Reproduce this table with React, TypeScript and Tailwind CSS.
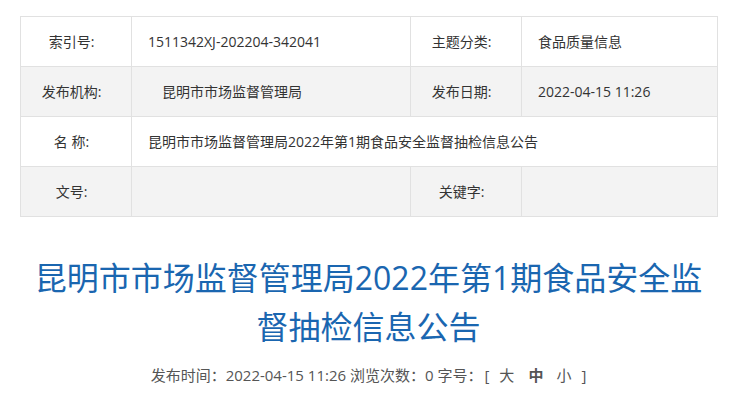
const font = "font-['Open_Sans','Noto_Sans_CJK_SC',sans-serif]";

function Label({ children }: { children: React.ReactNode }) {
  return (
    <td className="h-[50px] w-[111px] border border-[#e1e1e1] pr-[9px] text-center text-[14px] text-[#333]">
      {children}
    </td>
  );
}

function Value({ children, colSpan }: { children?: React.ReactNode; colSpan?: number }) {
  return (
    <td colSpan={colSpan} className="h-[50px] border border-[#e1e1e1] pl-[16px] text-[14px] text-[#333]">
      {children}
    </td>
  );
}

export default function App() {
  return (
    <div className={`min-h-[406px] bg-white pt-[16px] ${font}`}>
      <table className="mx-[20px] w-[697px] table-fixed border-collapse">
        <colgroup>
          <col className="w-[111px]" />
          <col className="w-[279px]" />
          <col className="w-[111px]" />
          <col className="w-[196px]" />
        </colgroup>
        <tbody>
          <tr className="bg-white">
            <Label>索引号:</Label>
            <Value>1511342XJ-202204-342041</Value>
            <Label>主题分类:</Label>
            <Value>食品质量信息</Value>
          </tr>
          <tr className="bg-[#f3f3f3]">
            <Label>发布机构:</Label>
            <Value>
              <span className="pl-[14px]">昆明市市场监督管理局</span>
            </Value>
            <Label>发布日期:</Label>
            <Value>2022-04-15 11:26</Value>
          </tr>
          <tr className="bg-white">
            <Label>名 称:</Label>
            <Value colSpan={3}>昆明市市场监督管理局2022年第1期食品安全监督抽检信息公告</Value>
          </tr>
          <tr className="bg-[#f3f3f3]">
            <Label>文号:</Label>
            <Value />
            <Label>关键字:</Label>
            <Value />
          </tr>
        </tbody>
      </table>

      <h1 className="mx-auto mt-[36px] w-[690px] text-center text-[32px] leading-[49px] text-[#1a66b0]">
        昆明市市场监督管理局2022年第1期食品安全监督抽检信息公告
      </h1>

      <div className="mt-[13px] flex justify-center text-[15px] text-[#555]">
        <span>发布时间：2022-04-15 11:26 浏览次数：0 字号：</span>
        <span className="ml-[2px]">[</span>
        <span className="ml-[10px]">大</span>
        <span className="ml-[14px] font-bold">中</span>
        <span className="ml-[13px]">小</span>
        <span className="ml-[10px]">]</span>
      </div>
    </div>
  );
}
